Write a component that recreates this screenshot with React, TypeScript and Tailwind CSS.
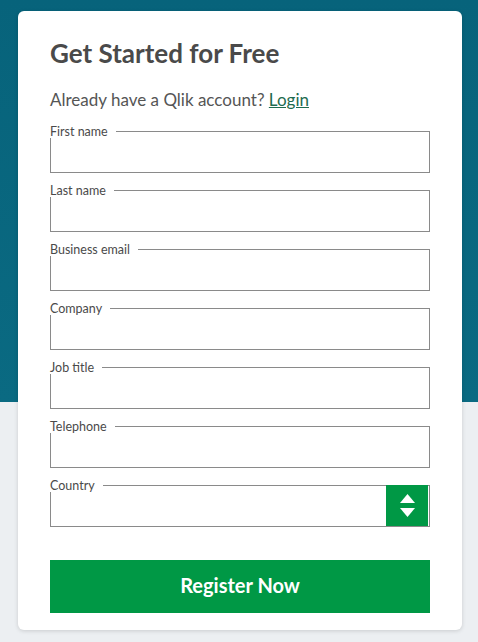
import React from "react"

const FIELDS = ["First name", "Last name", "Business email", "Company", "Job title", "Telephone"]

const FONT = { fontFamily: 'Lato, "Open Sans", sans-serif' }

function Field({ label, select }: { label: string; select?: boolean }) {
  return (
    <div className="relative h-[42px] border border-[#8a8a8a] flex justify-end">
      <span className="absolute left-[-1px] top-[-7px] bg-white pr-2 text-[12.5px] leading-[13px] text-[#4a4a4a]">
        {label}
      </span>
      {select && (
        <div className="w-[42px] -mt-px mr-px h-[41px] bg-[#009845] flex flex-col items-center justify-center gap-[5px]">
          <svg width="15" height="9" viewBox="0 0 15 9">
            <path d="M7.5 0 L15 9 L0 9 Z" fill="white" />
          </svg>
          <svg width="15" height="9" viewBox="0 0 15 9">
            <path d="M0 0 L15 0 L7.5 9 Z" fill="white" />
          </svg>
        </div>
      )}
    </div>
  )
}

export default function App() {
  return (
    <div
      className="h-[642px] w-[478px] overflow-hidden bg-[linear-gradient(to_bottom,#07637b_0px,#0a6a82_402px,#eceff2_402px)] pt-[11px] pl-[18px]"
      style={FONT}
    >
      <div className="w-[444px] h-[619px] bg-white rounded-[6px] shadow-[0_1px_4px_rgba(0,0,0,0.15)] px-[32px] pt-[26px]">
        <h1 className="text-[26px] font-bold text-[#4a4a4a] leading-[32px]">Get Started for Free</h1>
        <p className="mt-[20px] text-[17px] text-[#555] leading-[22px]">
          Already have a Qlik account?{" "}
          <a href="#" className="text-[#1e6b4f] underline">Login</a>
        </p>
        <div className="mt-[20px] flex flex-col gap-[17px]">
          {FIELDS.map(f => (
            <Field key={f} label={f} />
          ))}
          <Field label="Country" select />
        </div>
        <button className="mt-[33px] w-full h-[53px] bg-[#009845] text-white text-[20px] font-bold pb-[3px]">
          Register Now
        </button>
      </div>
    </div>
  )
}
